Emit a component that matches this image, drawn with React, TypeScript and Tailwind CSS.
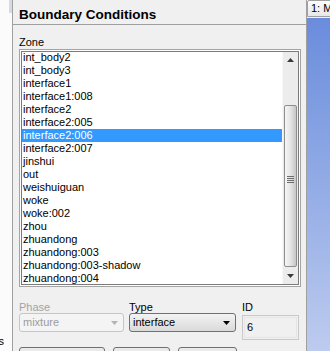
import React from 'react';

const zones = [
  'int_body2',
  'int_body3',
  'interface1',
  'interface1:008',
  'interface2',
  'interface2:005',
  'interface2:006',
  'interface2:007',
  'jinshui',
  'out',
  'weishuiguan',
  'woke',
  'woke:002',
  'zhou',
  'zhuandong',
  'zhuandong:003',
  'zhuandong:003-shadow',
  'zhuandong:004',
];

const Arrow = ({ up = false, color = '#000' }: { up?: boolean; color?: string }) => (
  <svg width="7" height="4" viewBox="0 0 7 4">
    {up ? <path d="M3.5 0 L7 4 L0 4 Z" fill={color} /> : <path d="M0 0 L7 0 L3.5 4 Z" fill={color} />}
  </svg>
);

const Scrollbar = () => (
  <div className="w-[16px] flex flex-col bg-[#ececec] border-l border-[#f7f7f7]">
    {/* up button */}
    <div className="h-[15px] flex items-center justify-center">
      <Arrow up color="#3a3a3a" />
    </div>
    <div className="h-[38px]"></div>
    {/* thumb */}
    <div className="h-[162px] mx-px rounded-[2px] border border-[#8e8e8e] bg-gradient-to-r from-[#f6f6f6] via-[#e4e4e4] to-[#c6c6c6] flex items-center justify-center">
      <div className="flex flex-col gap-[1px] -mt-[14px]">
        <div className="w-[7px] h-px bg-[#6e6e6e]"></div>
        <div className="w-[7px] h-px bg-[#6e6e6e]"></div>
        <div className="w-[7px] h-px bg-[#6e6e6e]"></div>
        <div className="w-[7px] h-px bg-[#6e6e6e]"></div>
      </div>
    </div>
    <div className="flex-1 flex items-center justify-center">
      <Arrow color="#3a3a3a" />
    </div>
  </div>
);

const App = () => {
  return (
    <div
      className="w-[330px] h-[351px] flex overflow-hidden bg-white text-[11px] text-black"
      style={{ fontFamily: '"Liberation Sans", Arial, sans-serif' }}
    >
      {/* cut-off left sidebar */}
      <div className="w-[13px] flex flex-col bg-[#fbfbfb]">
        <div className="ml-[9px] w-[3px] h-[13px] bg-[#d3dbe8]"></div>
        <div className="mt-auto mb-[3px] w-[4px] overflow-hidden flex justify-end leading-[13px]">
          <span className="whitespace-nowrap">Labels</span>
        </div>
      </div>

      {/* Boundary Conditions panel */}
      <div className="w-[295px] shrink-0 flex flex-col bg-[#f0f0f0] border-l border-r border-[#a0a0a0] overflow-hidden">
        <div className="h-[25px] shrink-0 border-b border-[#a0a0a0] pl-[6px] pt-[7px] text-[13.5px] font-bold leading-[16px]">
          Boundary Conditions
        </div>

        <div className="pl-[6px] pr-[5px] flex flex-col">
          <div className="mt-[11px] leading-[13px]">Zone</div>

          {/* list box */}
          <div className="h-[238px] border border-[#a3a3a3] bg-white p-px">
            <div className="h-full border border-[#7a7a7a] flex overflow-hidden">
              <div className="flex-1 flex flex-col -mt-px overflow-hidden">
                {zones.map((z, i) => (
                  <div
                    key={z}
                    className={
                      i === 6
                        ? 'h-[13px] shrink-0 leading-[13px] pl-[1px] bg-[#3399ff] text-white'
                        : 'h-[13px] shrink-0 leading-[13px] pl-[1px]'
                    }
                  >
                    {z}
                  </div>
                ))}
              </div>
              <Scrollbar />
            </div>
          </div>

          {/* bottom controls */}
          <div className="mt-[14px] flex">
            <div className="w-[105px] flex flex-col">
              <div className="leading-[12px] text-[#a3a3a3]">Phase</div>
              <div className="h-[19px] rounded-[3px] border border-[#c6c6c6] bg-[#f4f4f4] flex items-center pl-[3px] pr-[5px] text-[#9c9c9c]">
                <span className="flex-1">mixture</span>
                <Arrow color="#b4b4b4" />
              </div>
            </div>
            <div className="ml-[5px] w-[107px] flex flex-col">
              <div className="leading-[12px]">Type</div>
              <div className="h-[19px] rounded-[3px] border border-[#707070] bg-gradient-to-b from-[#f3f3f3] to-[#dadada] flex items-center pl-[3px] pr-[5px]">
                <span className="flex-1">interface</span>
                <Arrow />
              </div>
            </div>
            <div className="ml-[6px] w-[57px] flex flex-col">
              <div className="leading-[12px]">ID</div>
              <div className="mt-[2px] h-[25px] border border-[#c9c9c9] bg-[#f0f0f0] p-px">
                <div className="h-full border border-[#e6e6e6] pl-[2px] leading-[13px] pt-[3px]">6</div>
              </div>
            </div>
          </div>

          <div className="mt-[7px] flex gap-[8px]">
            <div className="w-[86px] h-[10px] rounded-t-[3px] border border-[#707070] bg-[#eaeaea]"></div>
            <div className="w-[57px] h-[10px] rounded-t-[3px] border border-[#707070] bg-[#eaeaea]"></div>
            <div className="w-[59px] h-[10px] rounded-t-[3px] border border-[#707070] bg-[#eaeaea]"></div>
          </div>
        </div>
      </div>

      {/* right strip: next window tab + blue backdrop */}
      <div className="w-[2px] bg-[#f7f7f7]"></div>
      <div className="flex-1 flex flex-col">
        <div className="h-[17px] shrink-0 border border-[#a0a0a0] rounded-tl-[2px] bg-gradient-to-b from-[#fdfdfd] to-[#e8e8e8] pl-[3px] leading-[14px] whitespace-nowrap overflow-hidden">
          1: Mesh
        </div>
        <div className="h-[1px] bg-[#f0f0f0]"></div>
        <div className="flex-1 bg-gradient-to-b from-[#6a8cdc] to-[#bdcbee]"></div>
      </div>
    </div>
  );
};

export default App;
